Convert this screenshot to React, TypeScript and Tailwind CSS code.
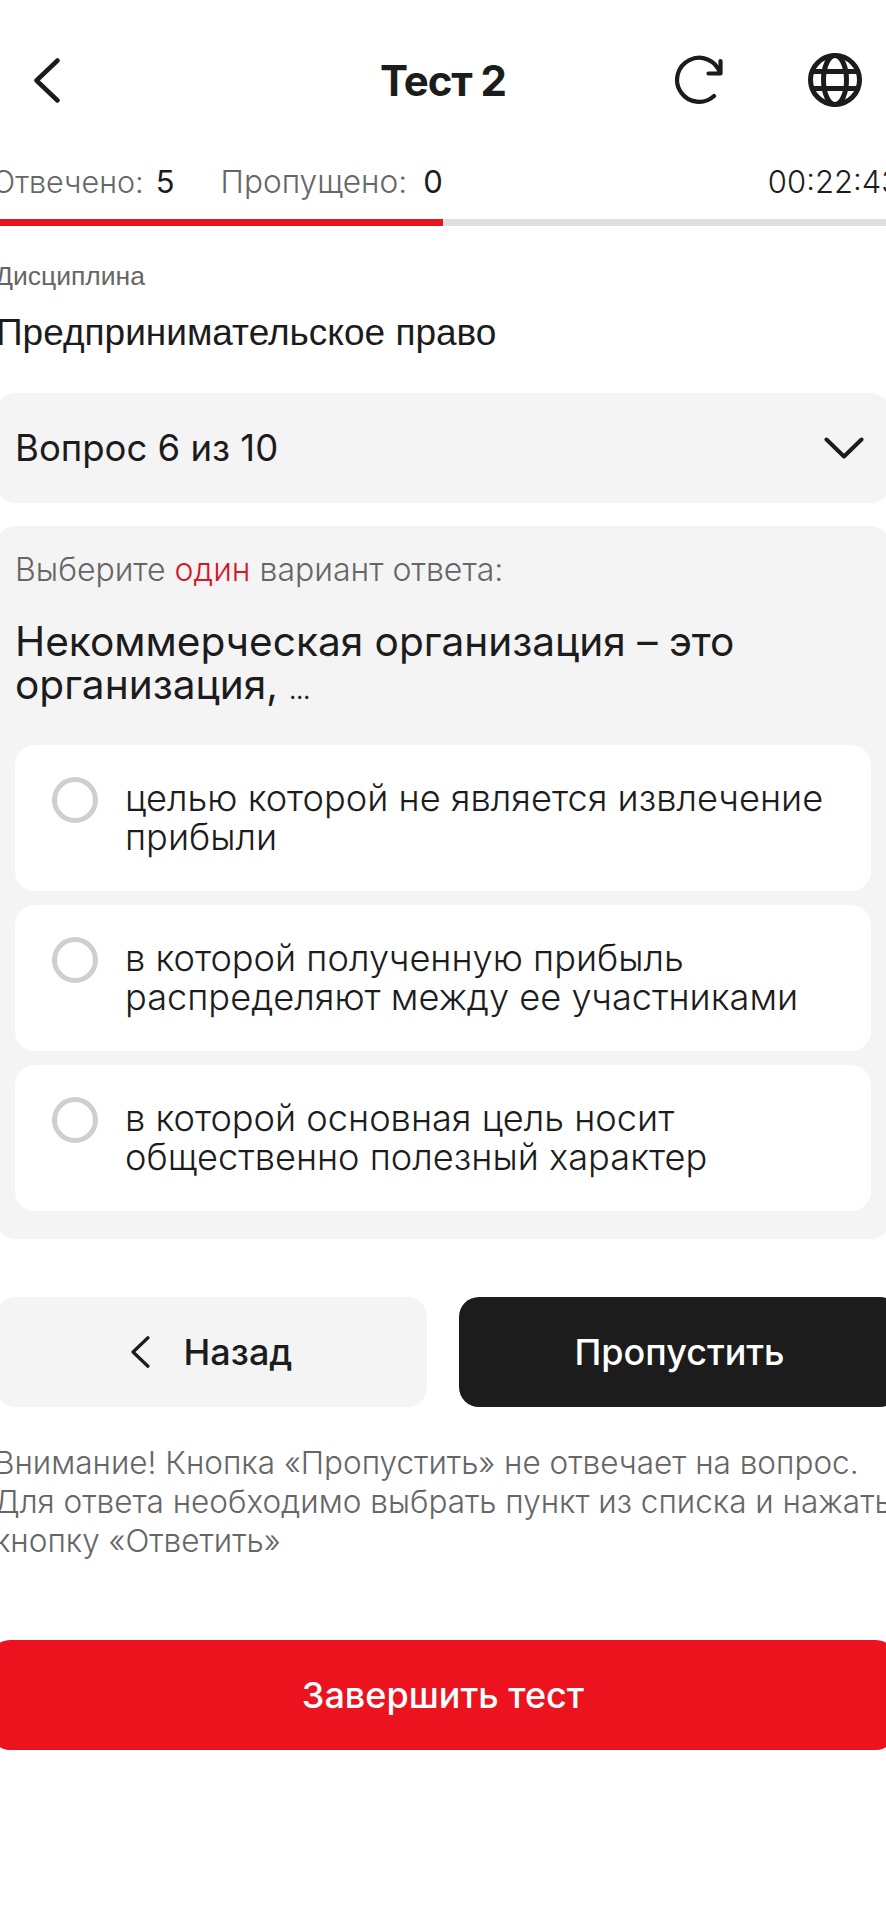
const options = [
  ["целью которой не является извлечение", "прибыли"],
  ["в которой полученную прибыль", "распределяют между ее участниками"],
  ["в которой основная цель носит", "общественно полезный характер"],
];

function BackIcon({ className }: { className: string }) {
  return (
    <svg className={className} viewBox="0 0 26 45" fill="none" stroke="currentColor" strokeWidth="4.5" strokeLinecap="round" strokeLinejoin="round">
      <path d="M23.5 2.5 2.5 22.5 23.5 42.5" />
    </svg>
  );
}

function RefreshIcon() {
  return (
    <svg className="h-[50px] w-[52px]" viewBox="0 0 52 50" fill="none" stroke="#1c1c1c" strokeWidth="4.2" strokeLinecap="round" strokeLinejoin="round">
      <path d="M41 41 A22 22 0 1 1 47 18" />
      <path d="M47.5 6 V18.5 H35.5" />
    </svg>
  );
}

function GlobeIcon() {
  return (
    <svg className="h-[54px] w-[54px]" viewBox="0 0 54 54" fill="none" stroke="#1c1c1c" strokeWidth="5">
      <circle cx="27" cy="27" r="24.5" />
      <ellipse cx="27" cy="27" rx="11.5" ry="24.5" />
      <path d="M4 18.5 H50 M4 35.5 H50" />
    </svg>
  );
}

function OptionRow({ lines }: { lines: string[] }) {
  return (
    <div className="flex h-[146px] items-center rounded-[20px] bg-white pl-[37px]">
      <div className="mt-[32px] h-[46px] w-[46px] shrink-0 self-start rounded-full border-[5px] border-[#cfcfcf]" />
      <div className="ml-[27px] text-[36.2px] leading-[39px] font-light whitespace-nowrap text-[#1c1c1c]">
        {lines.map((l) => (
          <div key={l}>{l}</div>
        ))}
      </div>
    </div>
  );
}

export default function App() {
  return (
    <div className="h-[1920px] w-[886px] overflow-hidden bg-white font-['Inter',sans-serif] text-[#1c1c1c]">
      {/* Header */}
      <div className="flex h-[160px] items-center">
        <div className="flex-1 pl-[24px]">
          <BackIcon className="ml-[10px] h-[45px] w-[26px]" />
        </div>
        <div className="text-[42px] font-bold tracking-tight">Тест 2</div>
        <div className="flex flex-1 items-center justify-end gap-[83px] pr-[24px]">
          <RefreshIcon />
          <GlobeIcon />
        </div>
      </div>

      {/* Progress */}
      <div className="-ml-[8px] flex h-[44px] w-[908px] items-center text-[31px] font-light">
        <span className="text-[30.5px] text-[#666]">Отвечено:</span>
        <span className="ml-3 font-normal">5</span>
        <span className="ml-[46px] text-[31.6px] text-[#666]">Пропущено:</span>
        <span className="ml-4 font-normal">0</span>
        <span className="ml-auto">00:22:43</span>
      </div>
      <div className="mt-[15px] h-[7px] w-full bg-[#dfdfe3]">
        <div className="h-full w-1/2 bg-[#e8141f]" />
      </div>

      {/* Discipline */}
      <div className="-ml-[5px] mt-[31px] font-['Liberation_Sans',sans-serif] text-[26.5px] text-[#666]">Дисциплина</div>
      <div className="-ml-[4px] mt-[8px] font-['Liberation_Sans',sans-serif] text-[37px]">Предпринимательское право</div>

      {/* Question select */}
      <div className="-mx-[4px] mt-[33px] flex h-[110px] items-center justify-between rounded-[20px] bg-[#f4f4f4] pl-[19px] pr-[26px]">
        <span className="text-[36.5px]">Вопрос 6 из 10</span>
        <svg className="h-[22px] w-[40px]" viewBox="0 0 40 22" fill="none" stroke="#1c1c1c" strokeWidth="4" strokeLinecap="round" strokeLinejoin="round">
          <path d="M2.5 2.5 20 19.5 37.5 2.5" />
        </svg>
      </div>

      {/* Question card */}
      <div className="-mx-[4px] mt-[23px] rounded-[20px] bg-[#f4f4f4] px-[19px] pb-[28px] pt-[20px]">
        <div className="text-[32px] font-light text-[#666]">
          Выберите <span className="text-[#d3182b]">один</span> вариант ответа:
        </div>
        <div className="mt-[26px] text-[40.6px] leading-[43px]">
          Некоммерческая организация – это
          <br />
          организация, <span className="text-[24px]">...</span>
        </div>
        <div className="mt-[33px] flex flex-col gap-[14px]">
          {options.map((o) => (
            <OptionRow key={o[0]} lines={o} />
          ))}
        </div>
      </div>

      {/* Buttons */}
      <div className="-ml-[4px] mt-[58px] flex w-[904px] gap-[32px]">
        <div className="flex h-[110px] w-[431px] items-center justify-center gap-[34px] rounded-[20px] bg-[#f4f4f4]">
          <BackIcon className="h-[32px] w-[19px]" />
          <span className="text-[36px] font-medium">Назад</span>
        </div>
        <div className="flex h-[110px] flex-1 items-center justify-center rounded-[20px] bg-[#1c1c1c] text-[36px] font-medium text-white">
          Пропустить
        </div>
      </div>

      <div className="-ml-[6px] mt-[36px] w-[900px] text-[31.5px] leading-[39px] font-light text-[#666]">
        <div>Внимание! Кнопка «Пропустить» не отвечает на вопрос.</div>
        <div>Для ответа необходимо выбрать пункт из списка и нажать</div>
        <div>кнопку «Ответить»</div>
      </div>

      <div className="-mx-[10px] mt-[80px] flex h-[110px] items-center justify-center rounded-[20px] bg-[#ec131f] text-[36px] font-medium text-white">
        Завершить тест
      </div>
    </div>
  );
}
